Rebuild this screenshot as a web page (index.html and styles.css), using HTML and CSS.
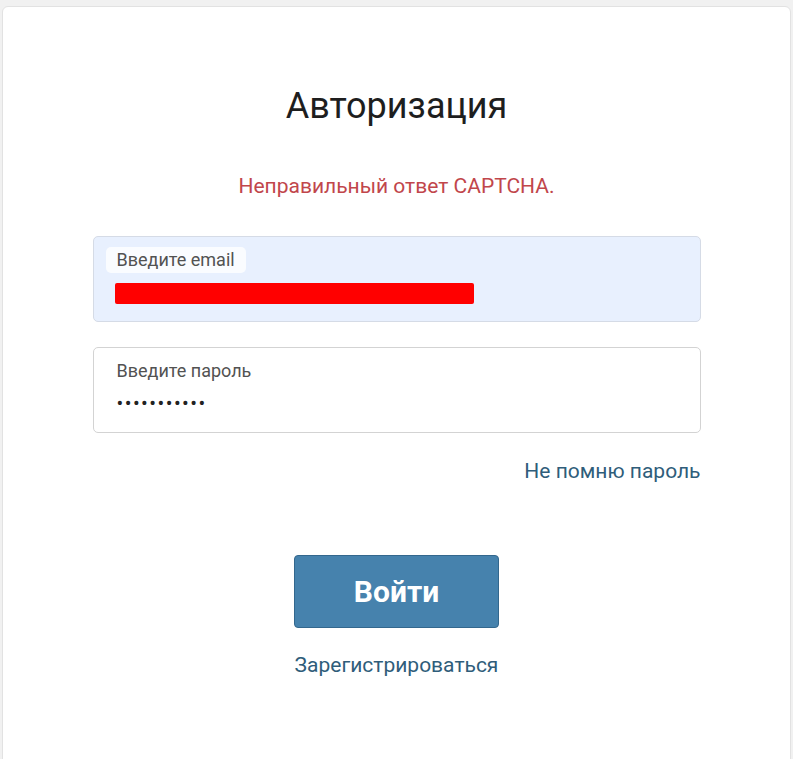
FILE: index.html
```html
<!DOCTYPE html>
<html lang="ru">
<head>
<meta charset="utf-8">
<title>Авторизация</title>
<link rel="stylesheet" href="styles.css">
</head>
<body>
<div class="card">
  <h1 class="title">Авторизация</h1>
  <p class="error">Неправильный ответ CAPTCHA.</p>
  <form class="form">
    <div class="field field-filled">
      <span class="label label-pill">Введите email</span>
      <div class="value"><span class="redact"></span></div>
    </div>
    <div class="field">
      <span class="label">Введите пароль</span>
      <div class="value dots">•••••••••••</div>
    </div>
    <div class="forgot-row"><a class="link forgot" href="#">Не помню пароль</a></div>
    <div class="actions">
      <button type="button" class="btn">Войти</button>
      <a class="link register" href="#">Зарегистрироваться</a>
    </div>
  </form>
</div>
</body>
</html>
```
FILE: styles.css
```css
html, body { margin: 0; padding: 0; }
body {
  background: #f1f1f1;
  font-family: Roboto, "Liberation Sans", sans-serif;
  padding: 6px 2px 0 2px;
  height: 759px;
  box-sizing: border-box;
  overflow: hidden;
}
.card {
  background: #fff;
  border: 1px solid #e2e2e2;
  border-radius: 6px;
  height: 780px;
  box-sizing: border-box;
  padding-top: 78px;
  display: flex;
  flex-direction: column;
  align-items: center;
}
.title {
  margin: 0;
  font-size: 36px;
  font-weight: 400;
  color: #1e1e1e;
  line-height: 42px;
}
.error {
  margin: 47px 0 0;
  font-size: 21px;
  color: #c1464b;
  line-height: 24px;
}
.form {
  width: 608px;
  margin-top: 38px;
  display: flex;
  flex-direction: column;
}
.field {
  height: 86px;
  box-sizing: border-box;
  border: 1px solid #d3d3d3;
  border-radius: 5px;
  padding: 10px 12px 0;
  margin-bottom: 25px;
  display: flex;
  flex-direction: column;
  align-items: flex-start;
}
.field-filled {
  background: #e8f0fe;
  border-color: #d5dbe6;
}
.label {
  font-size: 18px;
  color: #525252;
  line-height: 26px;
  padding: 0 11px;
}
.label-pill {
  background: #fafcff;
  border-radius: 5px;
}
.value {
  margin-top: 10px;
  padding-left: 9px;
}
.redact {
  display: block;
  width: 359px;
  height: 21px;
  background: #ff0000;
  border-radius: 2px;
}
.dots {
  margin-top: 7px;
  padding-left: 11px;
  font-size: 20px;
  color: #222;
  letter-spacing: 1.45px;
  line-height: 24px;
}
.forgot-row {
  display: flex;
  justify-content: flex-end;
  margin-top: 1px;
}
.link {
  color: #2f5d7a;
  text-decoration: none;
  font-size: 21px;
  line-height: 24px;
}
.actions {
  margin-top: 72px;
  display: flex;
  flex-direction: column;
  align-items: center;
}
.btn {
  width: 205px;
  height: 73px;
  background: #4682ad;
  border: 1px solid #33678d;
  border-radius: 4px;
  color: #fff;
  font-family: Roboto, "Liberation Sans", sans-serif;
  font-weight: 700;
  font-size: 30px;
  cursor: pointer;
}
.register {
  margin-top: 25px;
}
```
